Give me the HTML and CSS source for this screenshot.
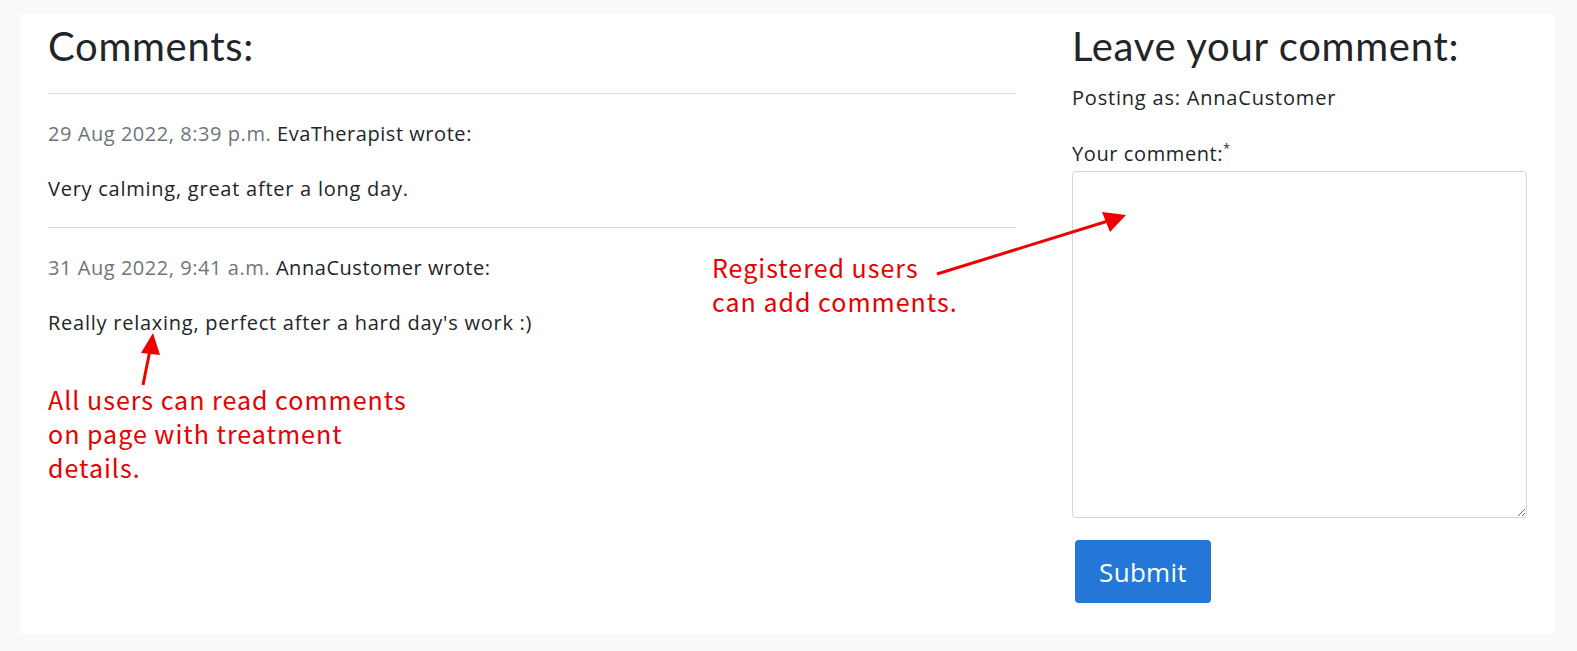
FILE: index.html
```html
<!DOCTYPE html>
<html lang="en">
<head>
<meta charset="utf-8">
<title>Comments</title>
<link rel="stylesheet" href="styles.css">
</head>
<body>
<div class="page">
  <section class="card comments">
    <h2 class="title">Comments:</h2>
    <div class="comment">
      <p class="meta"><span class="date">29 Aug 2022, 8:39 p.m.</span> EvaTherapist wrote:</p>
      <p class="body">Very calming, great after a long day.</p>
    </div>
    <div class="comment">
      <p class="meta"><span class="date">31 Aug 2022, 9:41 a.m.</span> AnnaCustomer wrote:</p>
      <p class="body">Really relaxing, perfect after a hard day's work :)</p>
    </div>
  </section>
  <section class="card form-card">
    <h2 class="title">Leave your comment:</h2>
    <p class="posting">Posting as: AnnaCustomer</p>
    <form class="form">
      <label class="label" for="c">Your comment:<sup class="req">*</sup></label>
      <textarea id="c" class="textarea"></textarea>
      <button type="button" class="btn">Submit</button>
    </form>
  </section>

  <div class="note note-left">All users can read comments<br>on page with treatment<br>details.</div>
  <div class="note note-right">Registered users<br>can add comments.</div>
  <svg class="arrows" width="1577" height="651" viewBox="0 0 1577 651">
    <line x1="143" y1="385" x2="150" y2="350" stroke="#ee0000" stroke-width="3"/>
    <polygon points="153,333 141,353 160,355" fill="#ee0000"/>
    <line x1="937" y1="274" x2="1108" y2="221" stroke="#ee0000" stroke-width="3"/>
    <polygon points="1126,215 1102,212 1110,232" fill="#ee0000"/>
  </svg>
</div>
</body>
</html>
```
FILE: styles.css
```css
* { box-sizing: border-box; }
html, body { margin: 0; padding: 0; }
body {
  background: #f8f9fa;
  font-family: "Open Sans", Lato, sans-serif;
  color: #212529;
  width: 1577px;
  height: 651px;
  overflow: hidden;
}
.page {
  position: relative;
  display: flex;
  padding: 14px 22px 17px 20px;
  height: 651px;
}
.card {
  background: #fff;
}
.comments {
  width: 1020px;
  padding: 8px 24px 0 28px;
}
.form-card {
  flex: 1;
  padding: 8px 28px 0 32px;
}
.title {
  margin: 0;
  font-family: Lato, sans-serif;
  font-size: 40px;
  font-weight: 400;
  line-height: 48px;
  letter-spacing: 0.7px;
  color: #212529;
}
.comments .title { margin-bottom: 23px; }
.comment {
  border-top: 1px solid #dcdcdc;
  padding-top: 25px;
  padding-bottom: 23px;
}
.comment p { margin: 0; font-size: 20px; line-height: 30px; letter-spacing: 0.75px; }
.comment .meta { margin-bottom: 25px; letter-spacing: 0.55px; }
.date { color: #6c757d; }
.posting {
  margin: 13px 0 0;
  font-size: 20px;
  line-height: 30px;
  letter-spacing: 0.8px;
}
.form { display: flex; flex-direction: column; align-items: flex-start; }
.label {
  margin-top: 26px;
  font-size: 20px;
  line-height: 30px;
  letter-spacing: 0.6px;
}
.req { font-size: 12px; vertical-align: top; line-height: 20px; }
.textarea {
  margin-top: 2px;
  width: 455px;
  height: 347px;
  border: 1px solid #d3d6da;
  border-radius: 4px;
  resize: vertical;
  font: inherit;
}
.btn {
  margin: 22px 0 0 3px;
  width: 136px;
  height: 63px;
  border: 0;
  border-radius: 4px;
  background: #2477d6;
  color: #fff;
  font-family: inherit;
  font-size: 26px;
  letter-spacing: 0.3px;
}
.note {
  position: absolute;
  color: #e60000;
  font-family: "Noto Sans CJK JP", sans-serif;
  font-size: 25px;
  line-height: 34px;
  letter-spacing: 1px;
}
.note-left { left: 48px; top: 382px; }
.note-right { left: 712px; top: 250px; }
.arrows { position: absolute; left: 0; top: 0; pointer-events: none; }
```
